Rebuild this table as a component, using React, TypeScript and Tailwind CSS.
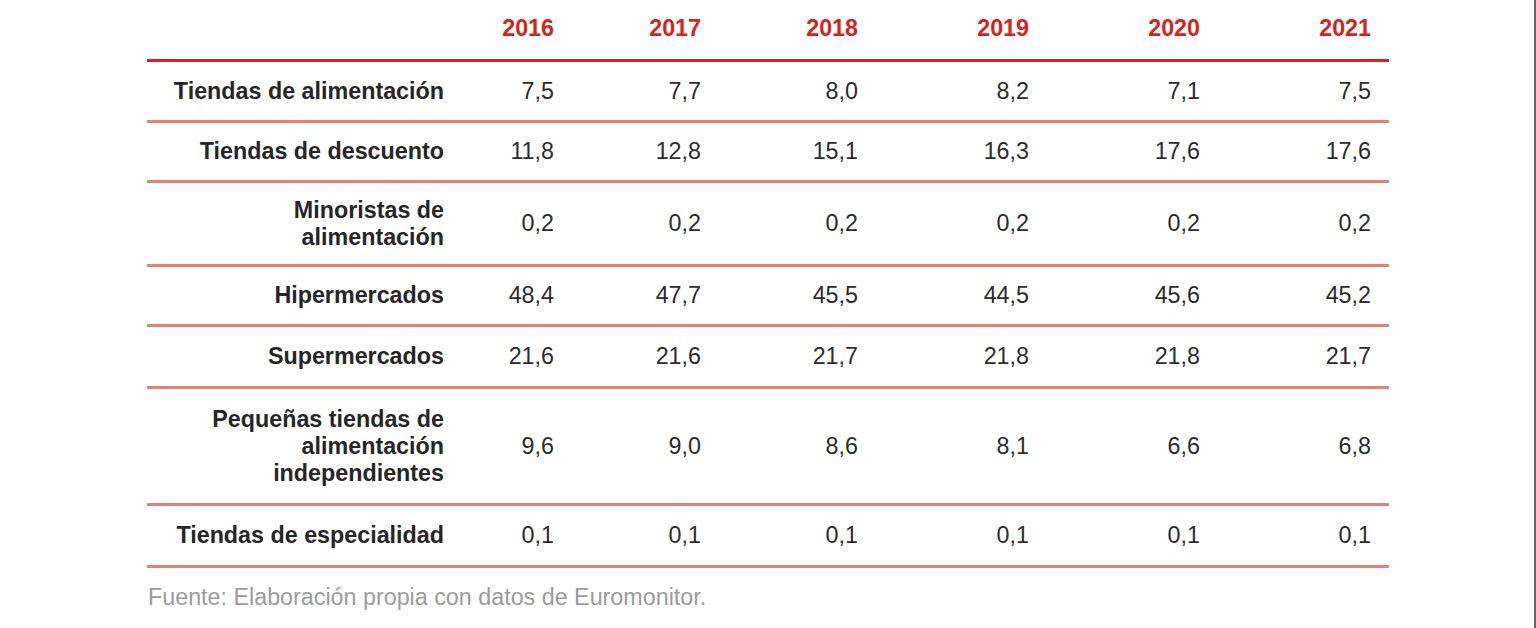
const years = ["2016", "2017", "2018", "2019", "2020", "2021"];

const rows = [
  { label: ["Tiendas de alimentación"], values: ["7,5", "7,7", "8,0", "8,2", "7,1", "7,5"], h: "h-[61px]" },
  { label: ["Tiendas de descuento"], values: ["11,8", "12,8", "15,1", "16,3", "17,6", "17,6"], h: "h-[60px]" },
  { label: ["Minoristas de", "alimentación"], values: ["0,2", "0,2", "0,2", "0,2", "0,2", "0,2"], h: "h-[84px]" },
  { label: ["Hipermercados"], values: ["48,4", "47,7", "45,5", "44,5", "45,6", "45,2"], h: "h-[60px]" },
  { label: ["Supermercados"], values: ["21,6", "21,6", "21,7", "21,8", "21,8", "21,7"], h: "h-[62px]" },
  {
    label: ["Pequeñas tiendas de", "alimentación", "independientes"],
    values: ["9,6", "9,0", "8,6", "8,1", "6,6", "6,8"],
    h: "h-[117px]",
  },
  { label: ["Tiendas de especialidad"], values: ["0,1", "0,1", "0,1", "0,1", "0,1", "0,1"], h: "h-[62px]" },
];

const gridCols = "grid grid-cols-[297px_110px_147px_157px_171px_171px_171px_18px] items-center";

export default function App() {
  return (
    <div className="min-h-[628px] w-full border-r-2 border-[#666] bg-white font-['Liberation_Sans',Arial,sans-serif] text-[23.3px] leading-[27px]">
      <div className="ml-[147px] w-[1242px]">
        {/* header */}
        <div className={`${gridCols} h-[62px] border-b-[3px] border-[#d6231e] pb-[2px]`}>
          <div />
          {years.map((y) => (
            <div key={y} className="text-right font-bold text-[#d6231e]">
              {y}
            </div>
          ))}
          <div />
        </div>

        {rows.map((row) => (
          <div key={row.label.join(" ")} className={`${gridCols} ${row.h} border-b-[3px] border-[#e2817a]`}>
            <div className="text-right font-bold text-[#262626]">
              {row.label.map((line) => (
                <div key={line}>{line}</div>
              ))}
            </div>
            {row.values.map((v, i) => (
              <div key={i} className="text-right text-[#2b2b2b]">
                {v}
              </div>
            ))}
            <div />
          </div>
        ))}

        <p className="mt-[16px] pl-px text-[#9b9b9b]">Fuente: Elaboración propia con datos de Euromonitor.</p>
      </div>
    </div>
  );
}
